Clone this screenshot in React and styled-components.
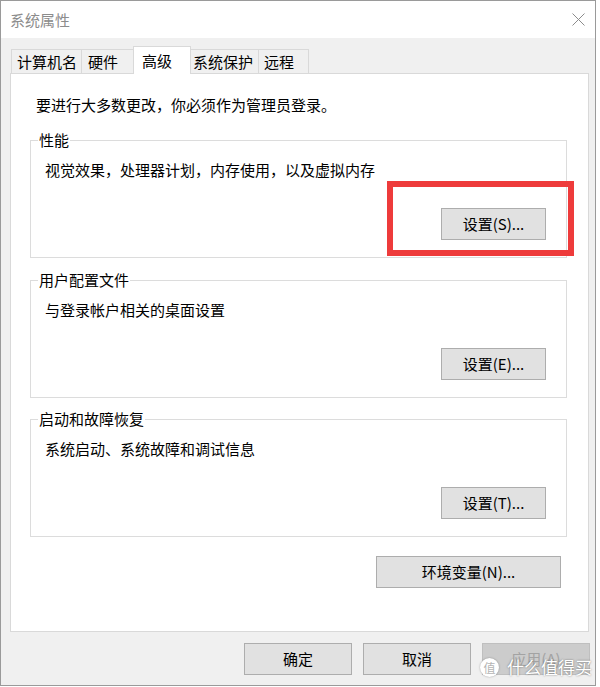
import React from "react";
import styled, { createGlobalStyle } from "styled-components";

const GlobalStyle = createGlobalStyle`
  html, body {
    margin: 0;
    padding: 0;
    background: #fff;
  }
  body {
    font-family: "Noto Sans CJK SC", "Noto Sans", sans-serif;
    font-size: 15px;
    color: #000;
  }
  * { box-sizing: border-box; }
`;

const Window = styled.div`
  position: relative;
  width: 596px;
  height: 686px;
  border: 1px solid #9a9a9a;
  background: #f0f0f0;
  display: flex;
  flex-direction: column;
`;

const TitleBar = styled.div`
  height: 37px;
  flex: none;
  background: #fff;
  display: flex;
  align-items: center;
  justify-content: space-between;
  padding: 0 10px 0 9px;
  color: #8c8c8c;
  line-height: 20px;
`;

const Body = styled.div`
  flex: 1;
  display: flex;
  flex-direction: column;
  padding: 8px 6px 10px 9px;
`;

const TabRow = styled.div`
  display: flex;
  align-items: flex-end;
  height: 27px;
  padding-left: 1px;
`;

const Tab = styled.div`
  position: relative;
  z-index: ${({ $active }) => ($active ? 2 : 0)};
  width: ${({ $w }) => $w}px;
  height: ${({ $active }) => ($active ? 28 : 24)}px;
  margin-bottom: ${({ $active }) => ($active ? -1 : 0)}px;
  margin-left: -1px;
  &:first-child { margin-left: 0; }
  padding-left: ${({ $pad }) => $pad}px;
  border: 1px solid #d9d9d9;
  border-bottom: none;
  background: ${({ $active }) => ($active ? "#fff" : "#f0f0f0")};
  display: flex;
  align-items: center;
  line-height: 20px;
  white-space: nowrap;
`;

const Panel = styled.div`
  height: 559px;
  background: #fff;
  border: 1px solid #d9d9d9;
  padding: 21px 21px 0 19px;
  display: flex;
  flex-direction: column;
`;

const Intro = styled.div`
  padding-left: 6px;
  line-height: 20px;
`;

const Group = styled.fieldset`
  margin: ${({ $gap }) => $gap}px 0 0;
  padding: 10px 20px 17px 14px;
  border: 1px solid #dcdcdc;
  min-width: 0;
`;

const Legend = styled.legend`
  padding: 0 1px;
  margin-left: -7px;
  line-height: 20px;
`;

const Desc = styled.div`
  line-height: 20px;
`;

const ButtonRow = styled.div`
  display: flex;
  justify-content: flex-end;
  margin-top: ${({ $top }) => $top}px;
  padding-right: ${({ $right }) => $right || 0}px;
`;

const Button = styled.button`
  width: ${({ $w }) => $w}px;
  height: 32px;
  padding: 0;
  background: ${({ disabled }) => (disabled ? "#cccccc" : "#e1e1e1")};
  border: 1px solid ${({ disabled }) => (disabled ? "#bfbfbf" : "#adadad")};
  color: ${({ disabled }) => (disabled ? "#a3a3a3" : "#000")};
  font-family: inherit;
  font-size: 15px;
  line-height: 20px;
  border-radius: 0;
`;

const ButtonBar = styled.div`
  display: flex;
  justify-content: flex-end;
  gap: 11px;
  margin-top: 11px;
  margin-right: -1px;
`;

const Highlight = styled.div`
  position: absolute;
  left: 386px;
  top: 180px;
  width: 187px;
  height: 75px;
  border: 6px solid #ee3b3b;
  pointer-events: none;
`;

const Watermark = styled.div`
  position: absolute;
  left: 479px;
  top: 656px;
  display: flex;
  align-items: center;
  gap: 8px;
  pointer-events: none;
`;

const Badge = styled.span`
  width: 19px;
  height: 19px;
  border-radius: 50%;
  background: #fff;
  color: #b5b5b5;
  font-size: 12px;
  line-height: 19px;
  text-align: center;
  box-shadow: 0 0 2px rgba(0, 0, 0, 0.35);
`;

const Brand = styled.span`
  color: #fff;
  font-size: 17px;
  line-height: 20px;
  text-shadow: 0 0 2px rgba(0, 0, 0, 0.5);
`;

const CloseIcon = () => (
  <svg width="13" height="13" viewBox="0 0 13 13">
    <path d="M0.5 0.5 L12.5 12.5 M12.5 0.5 L0.5 12.5" stroke="#8c8c8c" strokeWidth="1" fill="none" />
  </svg>
);

const tabs = [
  { label: "计算机名", w: 71, pad: 5 },
  { label: "硬件", w: 53, pad: 6 },
  { label: "高级", w: 58, pad: 8, active: true },
  { label: "系统保护", w: 69, pad: 2 },
  { label: "远程", w: 51, pad: 5 },
];

const groups = [
  { title: "性能", desc: "视觉效果，处理器计划，内存使用，以及虚拟内存", btn: "设置(S)...", gap: 15 },
  { title: "用户配置文件", desc: "与登录帐户相关的桌面设置", btn: "设置(E)...", gap: 12 },
  { title: "启动和故障恢复", desc: "系统启动、系统故障和调试信息", btn: "设置(T)...", gap: 11 },
];

export default function App() {
  return (
    <>
      <GlobalStyle />
      <Window>
        <TitleBar>
          <span>系统属性</span>
          <CloseIcon />
        </TitleBar>
        <Body>
          <TabRow>
            {tabs.map((t) => (
              <Tab key={t.label} $w={t.w} $pad={t.pad} $active={t.active}>
                {t.label}
              </Tab>
            ))}
          </TabRow>
          <Panel>
            <Intro>要进行大多数更改，你必须作为管理员登录。</Intro>
            {groups.map((g) => (
              <Group key={g.title} $gap={g.gap}>
                <Legend>{g.title}</Legend>
                <Desc>{g.desc}</Desc>
                <ButtonRow $top={28}>
                  <Button $w={105}>{g.btn}</Button>
                </ButtonRow>
              </Group>
            ))}
            <ButtonRow $top={19} $right={6}>
              <Button $w={185}>环境变量(N)...</Button>
            </ButtonRow>
          </Panel>
          <ButtonBar>
            <Button $w={108}>确定</Button>
            <Button $w={108}>取消</Button>
            <Button $w={108} disabled>应用(A)</Button>
          </ButtonBar>
        </Body>
        <Highlight />
        <Watermark>
          <Badge>值</Badge>
          <Brand>什么值得买</Brand>
        </Watermark>
      </Window>
    </>
  );
}
